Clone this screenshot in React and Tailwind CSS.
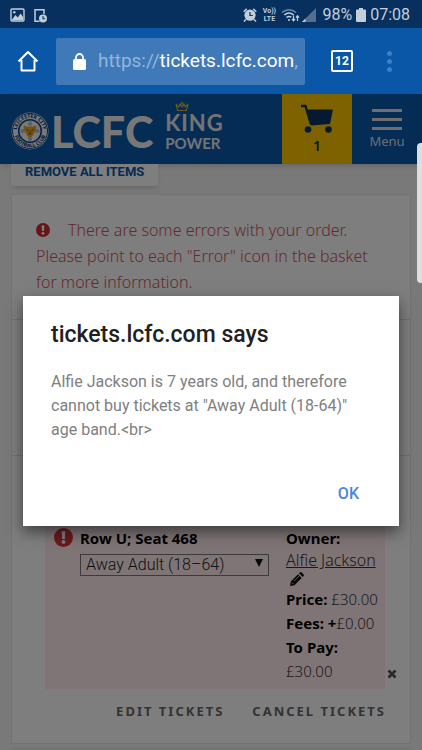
import React from "react";

function ErrorIcon({ className }) {
  return (
    <svg viewBox="0 0 20 20" className={className} aria-label="Error" role="img">
      <circle cx="10" cy="10" r="10" fill="currentColor" />
      <path d="M8 3.500h4l-.7 8H8.700z" fill="#fff" />
      <circle cx="10" cy="14.700" r="2" fill="#fff" />
    </svg>
  );
}

function StatusBar() {
  return (
    <div className="flex h-7 items-center bg-[#08305f] pt-[2px] pr-3 pl-[10px] text-[#c3cedb]">
      <svg viewBox="0 0 15 14" className="h-[14px] w-[15px]">
        <rect x="1" y="1" width="13" height="12" rx="1" fill="none" stroke="currentColor" strokeWidth="1.4" />
        <path d="M2 11.5 5.500 7l2.300 2.600L10.600 5.500 13 9v3H2z" fill="currentColor" />
        <circle cx="4.300" cy="4.300" r="1.200" fill="currentColor" />
      </svg>
      <svg viewBox="0 0 15 15" className="ml-2 h-[15px] w-[15px]">
        <path d="M11 6V1.700H2v11.600h4.500" fill="none" stroke="currentColor" strokeWidth="1.500" />
        <circle cx="10" cy="10.500" r="4" fill="currentColor" />
        <path d="M10 8v2.700h2.200" fill="none" stroke="#08305f" strokeWidth="1.100" />
      </svg>
      <div className="flex-1" />
      <svg viewBox="0 0 14 14" className="h-[14px] w-[14px]">
        <circle cx="7" cy="7.200" r="5.600" fill="currentColor" />
        <path d="M.7 3.700 3.700.9M13.300 3.700 10.300.9M2.800 11.500 1 13.500M11.200 11.500 13 13.500" stroke="currentColor" strokeWidth="1.500" />
        <path d="M7 4v3.500h2.800" fill="none" stroke="#08305f" strokeWidth="1.200" />
      </svg>
      <div className="ml-1 flex w-4 flex-col items-center text-[7px] leading-[8px] font-bold">
        <span>Vo))</span>
        <span>LTE</span>
      </div>
      <svg viewBox="0 0 19 14" className="ml-1 h-[14px] w-[19px]" fill="none" stroke="currentColor">
        <path d="M1 4.500C5 .9 11 .9 15 4.500" strokeWidth="1.500" opacity=".55" />
        <path d="M3.300 7c3-2.500 6.400-2.500 9.400 0" strokeWidth="1.600" />
        <path d="M5.500 9.500c1.600-1.300 3.300-1.300 4.800-.3" strokeWidth="1.600" />
        <path d="M7 12h2" strokeWidth="1.600" />
        <path d="M12.500 7.500v5M11 11l1.500 1.800L14 11M16.500 13V8M15 9.600l1.500-1.800L18 9.600" strokeWidth="1.200" />
      </svg>
      <svg viewBox="0 0 14 14" className="ml-[2px] h-[14px] w-[14px]">
        <path d="M14 0v14H0z" fill="currentColor" opacity=".4" />
        <path d="M3.500 10.500V14H0z" fill="currentColor" />
      </svg>
      <span className="ml-[6px] text-base leading-5">98%</span>
      <svg viewBox="0 0 10 14" className="ml-1 h-[14px] w-[10px]">
        <path d="M3 0h4v1.500h2q1 0 1 1V13q0 1-1 1H1q-1 0-1-1V2.500q0-1 1-1h2z" fill="currentColor" />
      </svg>
      <span className="ml-1 text-base leading-5">07:08</span>
    </div>
  );
}

function BrowserBar() {
  return (
    <div className="flex h-[66px] items-center bg-[#0a56a7] pr-[27px] pl-[17px]">
      <button aria-label="Home" className="text-white">
        <svg viewBox="0 0 22 22" className="h-[22px] w-[22px]" fill="none" stroke="currentColor" strokeWidth="2">
          <path d="M1.500 11.500 11 2l9.500 9.500M4.500 10v10.500h13V10" strokeLinejoin="round" />
        </svg>
      </button>
      <div className="ml-[17px] flex h-[47px] flex-1 items-center overflow-hidden rounded-[2px] bg-[#4079b8] pl-[17px]">
        <svg viewBox="0 0 13 17" className="h-[17px] w-[13px] shrink-0">
          <path d="M3 7V4.500a3.500 3.500 0 0 1 7 0V7" fill="none" stroke="#fff" strokeWidth="1.800" />
          <rect y="6" width="13" height="11" rx="1.500" fill="#fff" />
        </svg>
        <span className="ml-3 text-[19px] whitespace-nowrap text-white">
          <span className="text-[#91b5dc]">https://</span>tickets.lcfc.com<span className="text-[#91b5dc]">,</span>
        </span>
      </div>
      <button aria-label="12 open tabs" className="ml-[26px] flex h-[22px] w-[22px] items-center justify-center rounded-[2px] border-2 border-white text-xs font-bold text-white">
        12
      </button>
      <button aria-label="More options" className="ml-[30px] flex w-3 flex-col items-center gap-[3px]">
        <span className="h-[5px] w-[5px] rounded-full bg-[#3f7ec3]" />
        <span className="h-[5px] w-[5px] rounded-full bg-[#3f7ec3]" />
        <span className="h-[5px] w-[5px] rounded-full bg-[#3f7ec3]" />
      </button>
    </div>
  );
}

function Crest() {
  return (
    <svg viewBox="0 0 38 38" className="h-[38px] w-[38px] shrink-0">
      <defs>
        <path id="crest-top" d="M5.900 19a13.100 13.100 0 0 1 26.200 0" />
        <path id="crest-bottom" d="M2.800 19a16.200 16.200 0 0 0 32.400 0" />
      </defs>
      <circle cx="19" cy="19" r="18.500" fill="#f4f4f4" />
      <circle cx="19" cy="19" r="17.500" fill="none" stroke="#0b4a92" strokeWidth="1" />
      <circle cx="19" cy="19" r="11.300" fill="#f4f4f4" stroke="#0b4a92" strokeWidth="1.600" />
      <g fill="#083a78" fontSize="5" fontWeight="800" textAnchor="middle">
        <text><textPath href="#crest-top" startOffset="50%">LEICESTER CITY</textPath></text>
        <text><textPath href="#crest-bottom" startOffset="50%">FOOTBALL CLUB</textPath></text>
      </g>
      <g fill="#aebfd4">
        <ellipse cx="19" cy="11.500" rx="2" ry="2.600" />
        <ellipse cx="12" cy="19" rx="2.600" ry="2" />
        <ellipse cx="26" cy="19" rx="2.600" ry="2" />
        <ellipse cx="19" cy="26.500" rx="2" ry="2.600" />
      </g>
      <path d="M12.500 13.500 16 14.500h6l3.500-1-.5 4-1.500 2.500-1.500 3.500-3 2.500-3-2.500-1.500-3.500-1.500-2.500z" fill="#e8a323" />
      <path d="m15.500 17.500 2 1M22.500 17.500l-2 1M19 19v3m-1.500 0h3" stroke="#6a4a1c" strokeWidth=".9" />
    </svg>
  );
}

function SiteHeader() {
  return (
    <header className="flex h-[70px] bg-[#0a58aa] shadow-md">
      <a href="#home" aria-label="LCFC King Power" className="flex flex-1 items-center pt-1 pl-[11px] text-white">
        <Crest />
        <span className="ml-[2px] font-['Lato','Liberation_Sans',sans-serif] text-[43px] leading-none font-black text-[#eee]">LCFC</span>
        <span className="ml-3 flex flex-col items-start pb-2 font-['Lato','Liberation_Sans',sans-serif] font-bold text-[#e8e8e8]">
          <svg viewBox="0 0 14 10" className="ml-[10px] h-[10px] w-[14px]">
            <path d="m1 2 2.500 3L5 2l2 3 2-3 1.500 3L13 2l-1.500 6.500h-9z" fill="none" stroke="#d9b640" strokeWidth="1.100" />
            <path d="M7 0v3M5.700 1h2.600" stroke="#d9b640" />
          </svg>
          <span className="text-[22px] leading-[22px] tracking-[1px]">KING</span>
          <span className="text-[15px] leading-[18px]">POWER</span>
        </span>
      </a>
      <button aria-label="Basket, 1 item" className="flex w-[70px] flex-col items-center bg-[#ffc500] pt-[10px] text-[#0b3560]">
        <svg viewBox="0 0 34 30" className="h-[30px] w-[34px]">
          <path d="M6 5.500h27l-3 14.500-19 1.500z" fill="currentColor" />
          <path d="M1 2h4.500L11 20.500" fill="none" stroke="currentColor" strokeWidth="2.400" />
          <circle cx="8" cy="25.500" r="3.300" fill="currentColor" />
          <circle cx="28.500" cy="25.500" r="3.300" fill="currentColor" />
        </svg>
        <span className="text-sm leading-6 font-semibold">1</span>
      </button>
      <button className="flex w-[70px] flex-col items-center pt-[15px] text-[#d8dce2]">
        <span className="flex flex-col gap-[6px]">
          <span className="h-[3px] w-[30px] bg-[#ddd]" />
          <span className="h-[3px] w-[30px] bg-[#ddd]" />
          <span className="h-[3px] w-[30px] bg-[#ddd]" />
        </span>
        <span className="text-[13px] leading-[22px]">Menu</span>
      </button>
    </header>
  );
}

function Seat() {
  return (
    <div className="relative mr-[25px] ml-[33px] flex bg-[#ffebed] pt-2 pb-[6px] pl-[9px]">
      <ErrorIcon className="mt-[1px] h-[19px] w-[19px] shrink-0 text-[#d8323c]" />
      <div className="ml-[7px] min-w-0 flex-1">
        <label htmlFor="band" className="block text-[15px] leading-[22px] font-bold text-black">Row U; Seat 468</label>
        <div className="relative mt-[3px]">
          <select id="band" defaultValue="adult" className="h-[22px] w-full appearance-none border border-[#777] bg-transparent px-[5px] font-['Roboto',sans-serif] text-base leading-5 font-light text-[#222]">
            <option value="adult">Away Adult (18–64)</option>
            <option value="junior">Away Junior</option>
          </select>
          <svg viewBox="0 0 8 8" className="pointer-events-none absolute top-[7px] right-[6px] h-2 w-2">
            <path d="M0 0h8L4 8z" fill="#111" />
          </svg>
        </div>
      </div>
      <div className="ml-[17px] w-[99px] shrink-0 text-[15px] leading-6 font-light whitespace-nowrap text-[#333]">
        <div className="leading-[22px] font-bold text-black">Owner:</div>
        <a href="#owner" className="block text-base leading-[22px] underline">Alfie Jackson</a>
        <button aria-label="Edit owner" className="ml-1 flex h-4 items-center">
          <svg viewBox="0 0 14 14" className="h-[14px] w-[14px] text-[#111]" fill="currentColor">
            <path d="m0 14 .8-4.500L8 2.300 11.700 6l-7.200 7.200zM9 1.300 10.200.2q.6-.4 1.200.1l2.300 2.300q.5.600 0 1.200L12.700 5z" />
            <path d="m2 10.500 1.500 1.500M4 9l5-5" stroke="#ddd" strokeWidth=".8" />
          </svg>
        </button>
        <div><b className="font-bold text-black">Price:</b> £30.00</div>
        <div><b className="font-bold text-black">Fees: +</b>£0.00</div>
        <div className="font-bold text-black">To Pay:</div>
        <div>£30.00</div>
      </div>
      <button aria-label="Remove seat" className="absolute -right-3 bottom-[10px] text-[#555]">
        <svg viewBox="0 0 10 10" className="h-[10px] w-[10px]">
          <path d="m1.500 1.500 7 7m0-7-7 7" stroke="currentColor" strokeWidth="2.800" />
        </svg>
      </button>
    </div>
  );
}

function Basket() {
  return (
    <main className="px-[11px]">
      <button className="block h-[22px] rounded-b-[3px] bg-[#fdfdfd] px-[14px] font-['Roboto',sans-serif] text-[13px] leading-4 font-bold text-[#0a56a7] shadow-md">
        <span className="block h-[22px]">REMOVE ALL ITEMS</span>
      </button>
      <section className="mt-2 border border-[#e6e6e6] bg-[#fdfdfd]">
        <div className="h-[125px] border-b border-[#e2e2e2] px-6 pt-[22px] text-base leading-[26px] font-light text-[#c9555c]">
          <ErrorIcon className="mr-[18px] inline-block h-[14px] w-[14px] align-[-1px] text-[#d02a30]" />
          There are some errors with your order. Please point to each "Error" icon in the basket for more information.
        </div>
        <div className="h-[136px] border-b border-[#e2e2e2]" />
        <div className="pt-[63px]">
          <Seat />
          <div className="flex justify-end gap-7 pt-3 pr-6 pb-[22px] font-['Noto_Sans',sans-serif] text-[13px] leading-5 font-bold tracking-[2px] text-[#666]">
            <button>EDIT TICKETS</button>
            <button>CANCEL TICKETS</button>
          </div>
        </div>
      </section>
      <section className="mt-[4px] border-t border-[#e2e2e2]" />
    </main>
  );
}

function Alert() {
  return (
    <div className="absolute inset-0 bg-black/50 px-[23px] pt-[202px]">
      <div role="alertdialog" aria-labelledby="alert-title" aria-describedby="alert-text" className="h-[230px] bg-white px-7 pt-6 font-['Roboto',sans-serif] shadow-[0_6px_14px_rgba(0,0,0,0.5)]">
        <h1 id="alert-title" className="text-[23px] leading-[30px] font-medium text-[#212121]">tickets.lcfc.com says</h1>
        <p id="alert-text" className="mt-5 text-base leading-6 text-[#808080]">
          Alfie Jackson is 7 years old, and therefore cannot buy tickets at "Away Adult (18-64)" age band.&lt;br&gt;
        </p>
        <div className="mt-10 flex justify-end pr-3">
          <button className="text-base leading-6 font-medium text-[#4a86e0]">OK</button>
        </div>
      </div>
    </div>
  );
}

export default function App() {
  return (
    <div className="flex min-h-screen flex-col overflow-hidden font-['Roboto',sans-serif]">
      <StatusBar />
      <BrowserBar />
      <div className="relative flex-1 bg-[#f3f3f3] font-['Noto_Sans',sans-serif]">
        <SiteHeader />
        <Basket />
        <Alert />
        <div className="absolute top-[49px] right-0 h-[140px] w-[5px] rounded-l-[4px] bg-[#dedede]" />
      </div>
    </div>
  );
}
